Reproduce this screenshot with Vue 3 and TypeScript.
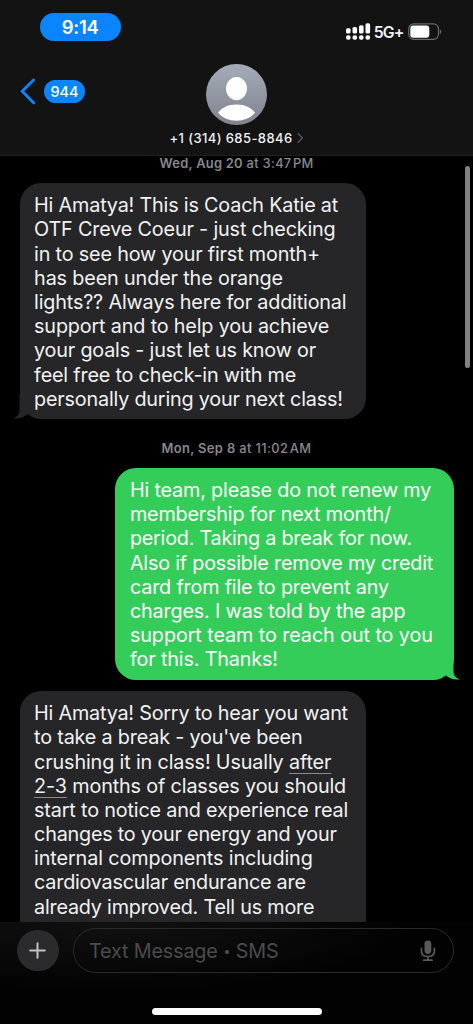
<script setup lang="ts">
import type { Directive } from 'vue'

interface Line { text: string; width: number; link?: string; linkFirst?: boolean }
interface Message { id: number; side: 'in' | 'out'; stamp?: string; stampRest?: string; stampWidth?: number; tail: boolean; lines: Line[] }

const messages: Message[] = [
  {
    id: 1, side: 'in', stamp: 'Wed, Aug 20', stampRest: ' at 3:47\u200APM', stampWidth: 154, tail: true,
    lines: [
      { text: 'Hi Amatya! This is Coach Katie at', width: 304 },
      { text: 'OTF Creve Coeur - just checking', width: 301.5 },
      { text: 'in to see how your first month+', width: 285.8 },
      { text: 'has been under the orange', width: 248.8 },
      { text: 'lights?? Always here for additional', width: 312.3 },
      { text: 'support and to help you achieve', width: 295 },
      { text: 'your goals - just let us know or', width: 281.8 },
      { text: 'feel free to check-in with me', width: 262 },
      { text: 'personally during your next class!', width: 308.6 },
    ],
  },
  {
    id: 2, side: 'out', stamp: 'Mon, Sep 8', stampRest: ' at 11:02\u200AAM', stampWidth: 150, tail: true,
    lines: [
      { text: 'Hi team, please do not renew my', width: 301.3 },
      { text: 'membership for next month/', width: 261 },
      { text: 'period. Taking a break for now.', width: 282 },
      { text: 'Also if possible remove my credit', width: 303.2 },
      { text: 'card from file to prevent any', width: 259 },
      { text: 'charges. I was told by the app', width: 275.6 },
      { text: 'support team to reach out to you', width: 303 },
      { text: 'for this. Thanks!', width: 148 },
    ],
  },
  {
    id: 3, side: 'in', tail: false,
    lines: [
      { text: "Hi Amatya! Sorry to hear you want", width: 313.8 },
      { text: "to take a break - you've been", width: 268.3 },
      { text: 'crushing it in class! Usually ', link: 'after', width: 297.2 },
      { text: ' months of classes you should', link: '2-3', linkFirst: true, width: 312 },
      { text: 'start to notice and experience real', width: 314 },
      { text: 'changes to your energy and your', width: 302.6 },
      { text: 'internal components including', width: 278.6 },
      { text: 'cardiovascular endurance are', width: 271.6 },
      { text: 'already improved. Tell us more', width: 280.2 },
    ],
  },
]

// Tracks a single line of text so that it fills the given width.
const vFit: Directive<HTMLElement, number> = {
  mounted(el, binding) {
    const count = (el.textContent ?? '').length
    const natural = el.getBoundingClientRect().width
    if (count > 0) el.style.letterSpacing = `${(binding.value - natural) / count}px`
  },
}
</script>

<template>
  <div class="phone">
    <header class="header">
      <div class="status">
        <div class="clock"><span v-fit="37">9:14</span></div>
        <div class="indicators">
          <svg class="signal" width="25" height="18" viewBox="0 0 25 18" fill="#fff">
            <rect x="0" y="5.2" width="4.6" height="5.4" rx="1.6" />
            <rect x="6.5" y="4" width="4.6" height="6.6" rx="1.6" />
            <rect x="13" y="2.2" width="4.6" height="8.4" rx="1.6" />
            <rect x="19.5" y="0.2" width="4.6" height="10.4" rx="1.6" />
            <rect x="0" y="12.2" width="4.6" height="4.6" rx="2" />
            <rect x="6.5" y="12.2" width="4.6" height="4.6" rx="2" />
            <rect x="13" y="12.2" width="4.6" height="4.6" rx="2" />
            <rect x="19.5" y="12.2" width="4.6" height="4.6" rx="2" />
          </svg>
          <span class="network"><span v-fit="30">5G+</span></span>
          <svg class="battery" width="34" height="18" viewBox="0 0 34 18">
            <rect x="0.7" y="0.9" width="29.8" height="15.4" rx="5" fill="none" stroke="#6b6b6b" stroke-width="1.2" />
            <rect x="2.3" y="2.5" width="19" height="12.2" rx="3" fill="#fff" />
            <path d="M31.8 6.2c1.9.9 1.9 4 0 4.9z" fill="#6b6b6b" />
          </svg>
        </div>
      </div>
      <div class="nav">
        <div class="back">
          <svg width="16" height="27" viewBox="0 0 16 27">
            <path d="M13.6 2 2.2 13.3 13.6 24.7" fill="none" stroke="#0a84ff" stroke-width="3" stroke-linecap="round" stroke-linejoin="round" />
          </svg>
          <div class="count"><span v-fit="28">944</span></div>
        </div>
        <div class="contact">
          <svg width="61" height="61" viewBox="0 0 61 61">
            <defs>
              <linearGradient id="avatar" x1="0" y1="0" x2="0" y2="1">
                <stop offset="0" stop-color="#a6abb9" />
                <stop offset="1" stop-color="#7f838e" />
              </linearGradient>
            </defs>
            <circle cx="30.5" cy="30.5" r="30.5" fill="url(#avatar)" />
            <ellipse cx="30.5" cy="24.6" rx="10.5" ry="11.6" fill="#fff" />
            <path d="M12 48.8C15.5 43.6 22 40.4 30.5 40.4S45.5 43.6 49 48.8C44.5 54 38 56.8 30.5 56.8S16.5 54 12 48.8Z" fill="#fff" />
          </svg>
          <div class="number">
            <span v-fit="123">+1 (314) 685-8846</span>
            <svg width="7" height="10" viewBox="0 0 7 10">
              <path d="M1.2.7 5.4 5 1.2 9.3" fill="none" stroke="#58585c" stroke-width="1.3" stroke-linecap="round" stroke-linejoin="round" />
            </svg>
          </div>
        </div>
      </div>
    </header>

    <main class="thread">
      <template v-for="message in messages" :key="message.id">
        <div v-if="message.stamp" class="stamp" :class="{ first: message.id === 1 }">
          <span v-fit="message.stampWidth ?? 150"><b>{{ message.stamp }}</b>{{ message.stampRest }}</span>
        </div>
        <div class="bubble" :class="[message.side, { open: !message.tail }]">
          <svg v-if="message.tail" class="tail" width="28" height="24" viewBox="0 0 28 24">
            <path d="M6.5 0V15.500C6.500 19 4.500 22 0 23.300 5.500 24.300 10.500 22.700 14.300 19.300L24 12V0Z" />
          </svg>
          <div v-for="line in message.lines" :key="line.text" class="line">
            <span v-fit="line.width"><u v-if="line.linkFirst">{{ line.link }}</u>{{ line.text }}<u v-if="line.link && !line.linkFirst">{{ line.link }}</u></span>
          </div>
        </div>
      </template>
      <div class="scrollbar"></div>
    </main>

    <footer class="composer">
      <div class="entry">
        <div class="plus">
          <svg width="17" height="17" viewBox="0 0 17 17">
            <path d="M8.5 1.2V15.8M1.2 8.5H15.8" stroke="#c1c1c3" stroke-width="2" stroke-linecap="round" />
          </svg>
        </div>
        <div class="field">
          <span v-fit="189.5">Text Message <span class="dot">•</span> SMS</span>
          <svg width="16" height="22" viewBox="0 0 16 22">
            <rect x="4.5" y="0.5" width="6.8" height="13.5" rx="3.4" fill="#59595c" />
            <path d="M1.4 8.4V10.4C1.4 14.4 4.1 16.5 7.9 16.5S14.4 14.4 14.4 10.4V8.4M7.9 16.5V20M3.7 20.2H12.1" fill="none" stroke="#59595c" stroke-width="1.7" stroke-linecap="round" />
          </svg>
        </div>
      </div>
      <div class="home"></div>
    </footer>
  </div>
</template>

<style>
body {
  background: #000;
}
</style>

<style scoped>
.phone {
  width: 473px;
  height: 1024px;
  display: flex;
  flex-direction: column;
  overflow: hidden;
  background: #000;
  color: #f2f2f3;
  font-family: Inter, "Liberation Sans", sans-serif;
  white-space: pre;
}
.header {
  flex: none;
  box-sizing: border-box;
  height: 156px;
  background: #131313;
  border-bottom: 1px solid #202021;
}
.status {
  display: flex;
  justify-content: space-between;
  padding: 12.5px 31.3px 0 39.6px;
}
.clock {
  width: 81.2px;
  height: 28.5px;
  border-radius: 15px;
  background: #0a84ff;
  color: #fff;
  text-align: center;
  font-size: 18.5px;
  font-weight: 600;
  line-height: 29px;
}
.indicators {
  display: flex;
  align-items: flex-start;
  padding-top: 10.5px;
}
.network {
  width: 30px;
  margin: 0 4px 0 3px;
  font-size: 15.8px;
  font-weight: 600;
  line-height: 19px;
}
.nav {
  display: flex;
  padding: 21.6px 0 0 20px;
}
.back {
  display: flex;
  align-items: flex-start;
  width: 149.5px;
  padding-top: 14.9px;
  gap: 8px;
}
.count {
  width: 41px;
  height: 23px;
  margin-top: 1.5px;
  border-radius: 12px;
  background: #0a84ff;
  color: #fff;
  text-align: center;
  font-size: 14.5px;
  font-weight: 500;
  line-height: 23px;
}
.contact {
  display: flex;
  flex-direction: column;
  align-items: center;
  width: 134px;
}
.number {
  display: flex;
  align-items: center;
  gap: 4px;
  padding-top: 3px;
  font-size: 13px;
  font-weight: 500;
  line-height: 20px;
}
.thread {
  position: relative;
  flex: none;
  height: 766px;
  overflow: hidden;
}
.stamp {
  height: 49px;
  box-sizing: border-box;
  padding-top: 21.5px;
  text-align: center;
  color: #87878c;
  font-size: 12.9px;
  font-weight: 500;
  line-height: 18px;
}
.stamp.first {
  height: 27px;
  padding-top: 0;
  line-height: 16px;
}
.stamp b {
  font-weight: 600;
}
.bubble {
  position: relative;
  box-sizing: border-box;
  border-radius: 21px;
  padding: 10.2px 0 8px 14.6px;
  font-size: 19.8px;
  line-height: 24.2px;
}
.bubble.in {
  width: 346.5px;
  margin-left: 19.5px;
  background: #262628;
}
.bubble.out {
  width: 338.4px;
  margin-left: 115.3px;
  margin-bottom: 11px;
  background: #34cd5a;
  color: #fff;
}
.bubble.open {
  padding-top: 10.6px;
  padding-bottom: 60px;
}
.line {
  position: relative;
  height: 24.2px;
}
.line u {
  text-decoration-color: #8b8b8e;
  text-decoration-thickness: 1px;
  text-underline-offset: 4px;
  text-decoration-skip-ink: none;
}
.tail {
  position: absolute;
  bottom: 0;
  left: -6.5px;
  fill: #262628;
}
.out .tail {
  left: auto;
  right: -6.5px;
  transform: scaleX(-1);
  fill: #34cd5a;
}
.scrollbar {
  position: absolute;
  top: 10px;
  right: 3.4px;
  width: 4.4px;
  height: 202px;
  border-radius: 3px;
  background: #828282;
}
.composer {
  flex: 1;
  background: radial-gradient(ellipse 300px 70px at 110px 0, #111 0%, #0a0a0a 50%, #020202 100%);
}
.entry {
  display: flex;
  align-items: center;
  gap: 14.5px;
  padding: 6px 0 0 17px;
}
.plus {
  display: flex;
  align-items: center;
  justify-content: center;
  width: 41.5px;
  height: 41.5px;
  border-radius: 50%;
  background: #2b2b2d;
}
.field {
  display: flex;
  align-items: center;
  justify-content: space-between;
  box-sizing: border-box;
  width: 381px;
  height: 45px;
  padding: 0 17px 0 15px;
  border: 1.3px solid #2a2a2c;
  border-radius: 23px;
  color: #4b4b4e;
  font-size: 19.8px;
}
.dot {
  font-size: 13px;
  line-height: 1;
  vertical-align: 2px;
}
.home {
  width: 169.5px;
  height: 6.5px;
  margin: 35px 0 0 152px;
  border-radius: 4px;
  background: #fff;
}
</style>
